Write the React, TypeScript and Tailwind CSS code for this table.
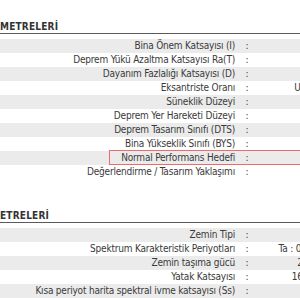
const bina: [string, string][] = [
  ["Bina Önem Katsayısı (I)", ""],
  ["Deprem Yükü Azaltma Katsayısı Ra(T)", ""],
  ["Dayanım Fazlalığı Katsayısı (D)", ""],
  ["Eksantriste Oranı", "Uygun değil"],
  ["Süneklik Düzeyi", ""],
  ["Deprem Yer Hareketi Düzeyi", ""],
  ["Deprem Tasarım Sınıfı (DTS)", ""],
  ["Bina Yükseklik Sınıfı (BYS)", ""],
  ["Normal Performans Hedefi", ""],
  ["Değerlendirme / Tasarım Yaklaşımı", ""],
]

const zemin: [string, string][] = [
  ["Zemin Tipi", ""],
  ["Spektrum Karakteristik Periyotları", "Ta : 0.10 - Tb : 0.50"],
  ["Zemin taşıma gücü", "250 kN/m²"],
  ["Yatak Katsayısı", "16000 kN/m³"],
  ["Kısa periyot harita spektral ivme katsayısı (Ss)", ""],
  ["", ""],
]

function Row({ label, value, i, mark }: { label: string; value: string; i: number; mark?: boolean }) {
  return (
    <div className={`relative flex h-[14px] items-center ${i % 2 === 0 ? "bg-[#ebebeb]" : "bg-white"}`}>
      <div className="w-[240px] shrink-0 whitespace-nowrap pr-[5px] text-right">{label}</div>
      <div className="w-[14px] shrink-0 text-center">{label ? ":" : ""}</div>
      <div className="flex-1 whitespace-nowrap pl-[6px] text-center">{value}</div>
      {mark && <div className="absolute bottom-0 left-[109px] right-0 top-[-1px] border border-[#ef6b6b]" />}
    </div>
  )
}

function Section({ title, rows, markAt }: { title: string; rows: [string, string][]; markAt?: number }) {
  return (
    <div>
      <div className="flex h-[34px] items-end border-b border-[#5a5a5a]">
        <span className="text-[10px] font-bold leading-[12px] tracking-[0.2px] text-[#333]">{title}</span>
      </div>
      <div className="mt-[5px]">
        {rows.map(([l, v], i) => (
          <Row key={i} label={l} value={v} i={i} mark={i === markAt} />
        ))}
      </div>
    </div>
  )
}

export default function App() {
  return (
    <div className="h-[300px] w-[300px] overflow-hidden bg-white">
      <div
        className="w-[380px] text-[10px] leading-[14px] tracking-[-0.2px] text-[#3a3a3a]"
        style={{ fontFamily: '"DejaVu Sans Condensed", "DejaVu Sans", sans-serif' }}
      >
        <Section title="METRELERİ" rows={bina} markAt={8} />
        <div className="mt-[10px]">
          <Section title="ETRELERİ" rows={zemin} />
        </div>
      </div>
    </div>
  )
}
